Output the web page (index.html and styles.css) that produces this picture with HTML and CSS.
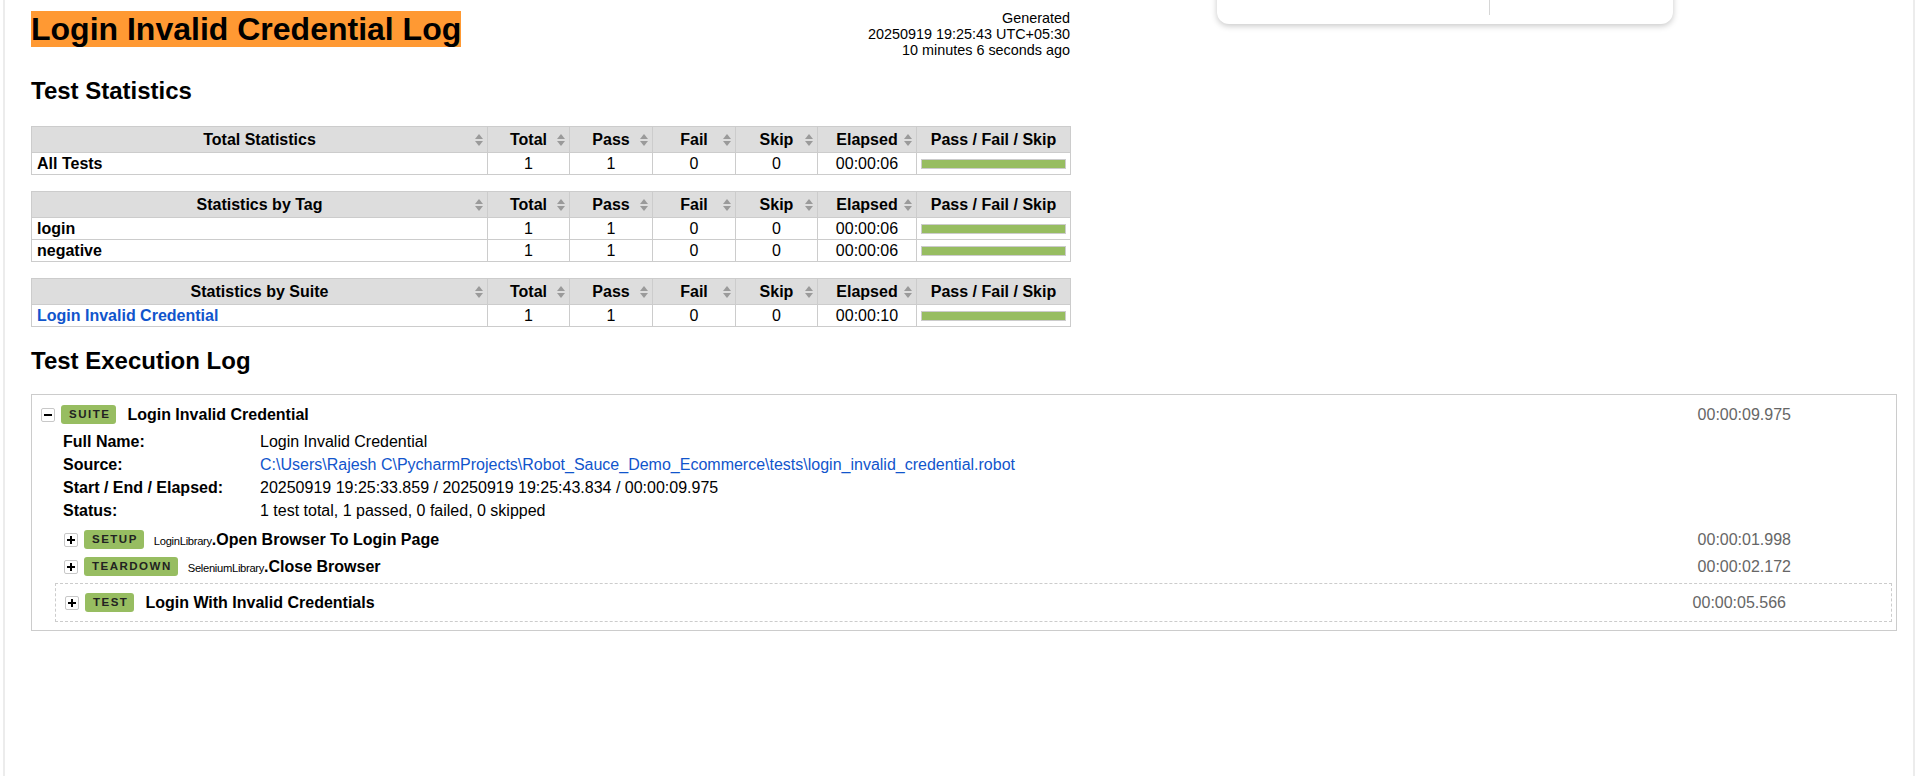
FILE: index.html
```html
<!DOCTYPE html>
<html lang="en">
<head>
<meta charset="utf-8">
<title>Login Invalid Credential Log</title>
<link rel="stylesheet" href="styles.css">
</head>
<body>
<div class="page">
  <div class="popup">
    <div class="popup-col popup-left"></div>
    <div class="popup-col"></div>
  </div>

  <div class="header">
    <h1>Login Invalid Credential Log</h1>
    <div class="generated">Generated<br>20250919 19:25:43 UTC+05:30<br>10 minutes 6 seconds ago</div>
  </div>

  <h2 class="first-h2">Test Statistics</h2>

  <table class="stats">
    <colgroup><col class="c-name"><col class="c-stat"><col class="c-stat2"><col class="c-stat2"><col class="c-stat"><col class="c-elapsed"><col class="c-graph"></colgroup>
    <thead><tr><th class="sort">Total Statistics</th><th class="sort">Total</th><th class="sort">Pass</th><th class="sort">Fail</th><th class="sort">Skip</th><th class="sort">Elapsed</th><th>Pass / Fail / Skip</th></tr></thead>
    <tbody>
      <tr><td class="name">All Tests</td><td>1</td><td>1</td><td>0</td><td>0</td><td>00:00:06</td><td class="graph"><div class="bar"></div></td></tr>
    </tbody>
  </table>

  <table class="stats">
    <colgroup><col class="c-name"><col class="c-stat"><col class="c-stat2"><col class="c-stat2"><col class="c-stat"><col class="c-elapsed"><col class="c-graph"></colgroup>
    <thead><tr><th class="sort">Statistics by Tag</th><th class="sort">Total</th><th class="sort">Pass</th><th class="sort">Fail</th><th class="sort">Skip</th><th class="sort">Elapsed</th><th>Pass / Fail / Skip</th></tr></thead>
    <tbody>
      <tr><td class="name">login</td><td>1</td><td>1</td><td>0</td><td>0</td><td>00:00:06</td><td class="graph"><div class="bar"></div></td></tr>
      <tr><td class="name">negative</td><td>1</td><td>1</td><td>0</td><td>0</td><td>00:00:06</td><td class="graph"><div class="bar"></div></td></tr>
    </tbody>
  </table>

  <table class="stats">
    <colgroup><col class="c-name"><col class="c-stat"><col class="c-stat2"><col class="c-stat2"><col class="c-stat"><col class="c-elapsed"><col class="c-graph"></colgroup>
    <thead><tr><th class="sort">Statistics by Suite</th><th class="sort">Total</th><th class="sort">Pass</th><th class="sort">Fail</th><th class="sort">Skip</th><th class="sort">Elapsed</th><th>Pass / Fail / Skip</th></tr></thead>
    <tbody>
      <tr><td class="name"><a href="#s1">Login Invalid Credential</a></td><td>1</td><td>1</td><td>0</td><td>0</td><td>00:00:10</td><td class="graph"><div class="bar"></div></td></tr>
    </tbody>
  </table>

  <h2>Test Execution Log</h2>

  <div class="suite" id="s1">
    <div class="el-header suite-header">
      <span class="toggle minus"></span>
      <span class="label">SUITE</span>
      <span class="el-name">Login Invalid Credential</span>
      <span class="elapsed">00:00:09.975</span>
    </div>
    <table class="metadata">
      <tr><th>Full Name:</th><td>Login Invalid Credential</td></tr>
      <tr><th>Source:</th><td><a href="#src">C:\Users\Rajesh C\PycharmProjects\Robot_Sauce_Demo_Ecommerce\tests\login_invalid_credential.robot</a></td></tr>
      <tr><th>Start / End / Elapsed:</th><td>20250919 19:25:33.859 / 20250919 19:25:43.834 / 00:00:09.975</td></tr>
      <tr><th>Status:</th><td>1 test total, 1 passed, 0 failed, 0 skipped</td></tr>
    </table>
    <div class="children">
      <div class="el-header kw">
        <span class="toggle plus"></span>
        <span class="label">SETUP</span>
        <span class="kw-name"><span class="parent">LoginLibrary</span><b>.Open Browser To Login Page</b></span>
        <span class="elapsed">00:00:01.998</span>
      </div>
      <div class="el-header kw">
        <span class="toggle plus"></span>
        <span class="label">TEARDOWN</span>
        <span class="kw-name"><span class="parent">SeleniumLibrary</span><b>.Close Browser</b></span>
        <span class="elapsed">00:00:02.172</span>
      </div>
      <div class="test">
        <div class="el-header test-header">
          <span class="toggle plus"></span>
          <span class="label">TEST</span>
          <span class="el-name">Login With Invalid Credentials</span>
          <span class="elapsed">00:00:05.566</span>
        </div>
      </div>
    </div>
  </div>
</div>
</body>
</html>
```

FILE: styles.css
```css
html, body {
  margin: 0;
  padding: 0;
  background: #fff;
}

body {
  font-family: "Liberation Sans", Arial, Helvetica, sans-serif;
  font-size: 16px;
  color: #000;
}

a {
  color: #15c;
  text-decoration: none;
}

.page {
  position: relative;
  box-sizing: border-box;
  min-height: 776px;
  margin: 0 2px 0 3px;
  border-left: 2px solid #ececec;
  border-right: 2px solid #ececec;
  padding: 10px 15px 0 26px;
  overflow: hidden;
}

/* partially scrolled-off floating panel at the top */
.popup {
  position: absolute;
  left: 1212px;
  top: -40px;
  width: 456px;
  height: 64px;
  box-sizing: border-box;
  padding-bottom: 9px;
  display: flex;
  background: #fff;
  border-radius: 12px;
  box-shadow: 0 2px 6px rgba(0, 0, 0, 0.22);
}

.popup-col {
  flex: 1;
}

.popup-left {
  flex: 0 0 272px;
  border-right: 1px solid #d6d6d6;
}

/* header */
.header {
  width: 1039px;
  display: flex;
  justify-content: space-between;
  align-items: flex-start;
}

h1 {
  margin: 1px 0 0;
  font-size: 32px;
  line-height: 36px;
  font-weight: bold;
  background: #ff9933;
}

.generated {
  font-size: 14.4px;
  line-height: 16px;
  text-align: right;
}

h2 {
  margin: 20px 0 0;
  font-size: 24px;
  line-height: 27px;
  font-weight: bold;
}

.first-h2 {
  margin-top: 19px;
}

/* statistics tables */
.stats {
  width: 1040px;
  table-layout: fixed;
  border-collapse: separate;
  border-spacing: 0;
  border-top: 1px solid #ccc;
  border-left: 1px solid #ccc;
  margin-top: 16px;
  font-size: 16px;
}

.first-h2 + .stats {
  margin-top: 22px;
}

.c-name { width: 456px; }
.c-stat { width: 82px; }
.c-stat2 { width: 83px; }
.c-elapsed { width: 99px; }
.c-graph { width: 154px; }

.stats th,
.stats td {
  border-right: 1px solid #ccc;
  border-bottom: 1px solid #ccc;
  padding: 0;
  text-align: center;
  white-space: nowrap;
}

.stats th {
  position: relative;
  background: #ddd;
  font-weight: bold;
  line-height: 25px;
}

.stats td {
  line-height: 21px;
}

.stats td.name {
  text-align: left;
  font-weight: bold;
  padding-left: 5px;
}

.stats th.sort::before,
.stats th.sort::after {
  content: "";
  position: absolute;
  right: 4px;
  width: 0;
  height: 0;
  border-left: 4px solid transparent;
  border-right: 4px solid transparent;
}

.stats th.sort::before {
  top: 7px;
  border-bottom: 5px solid #9a9a9a;
}

.stats th.sort::after {
  top: 14px;
  border-top: 5px solid #9a9a9a;
}

.stats td.graph {
  padding: 0 4px;
}

.bar {
  height: 8px;
  border: 1px solid #ccc;
  background: #97bd61;
  margin-top: 1px;
}

/* execution log */
.suite {
  margin-top: 20px;
  border: 1px solid #ccc;
  width: 1866px;
  box-sizing: border-box;
}

.el-header {
  display: flex;
  align-items: center;
  box-sizing: border-box;
  padding-left: 9px;
}

.suite-header {
  height: 35px;
  padding-top: 4px;
}

.toggle {
  position: relative;
  flex: 0 0 auto;
  width: 14px;
  height: 14px;
  box-sizing: border-box;
  border: 1px solid #c8c8c8;
  border-radius: 2px;
  background: #fff;
  margin-right: 6px;
}

.toggle::before {
  content: "";
  position: absolute;
  left: 2px;
  top: 5px;
  width: 8px;
  height: 2px;
  background: #000;
}

.toggle.plus::after {
  content: "";
  position: absolute;
  left: 5px;
  top: 2px;
  width: 2px;
  height: 8px;
  background: #000;
}

.label {
  flex: 0 0 auto;
  height: 19px;
  line-height: 19px;
  padding: 0 6px 0 8px;
  font-size: 11.5px;
  font-weight: bold;
  letter-spacing: 1.5px;
  color: #222;
  background: #97bd61;
  border-radius: 3px;
}

.el-name {
  margin-left: 11px;
  font-weight: bold;
  white-space: nowrap;
}

.kw-name {
  margin-left: 10px;
  white-space: nowrap;
}

.parent {
  font-size: 11.2px;
  letter-spacing: -0.3px;
}

.elapsed {
  margin-left: auto;
  color: #666;
  white-space: nowrap;
}

.suite-header .elapsed {
  margin-right: 105px;
}

.metadata {
  margin-left: 31px;
  border-collapse: collapse;
  border-spacing: 0;
}

.metadata th,
.metadata td {
  padding: 0;
  line-height: 23px;
  text-align: left;
  vertical-align: middle;
  white-space: nowrap;
}

.metadata th {
  width: 197px;
  font-weight: bold;
}

.children {
  margin: 4px 4px 8px 23px;
}

.kw {
  height: 27px;
}

.kw .elapsed {
  margin-right: 101px;
}

.test {
  margin-top: 3px;
  border: 1px dashed #ccc;
}

.test-header {
  height: 37px;
}

.test-header .elapsed {
  margin-right: 105px;
}
```
